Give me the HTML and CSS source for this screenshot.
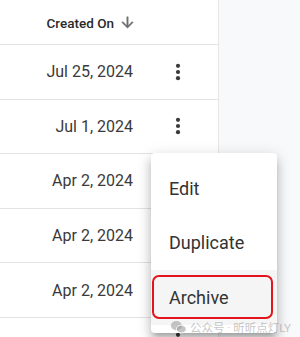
FILE: index.html
```html
<!DOCTYPE html>
<html lang="en">
<head>
    <meta charset="UTF-8">
    <meta name="viewport" content="width=device-width, initial-scale=1.0">
    <title>Created On</title>
    <link rel="stylesheet" href="styles.css">
</head>
<body>

    <div class="page">
        <div class="table">
            <div class="row head-row">
                <div class="cell-date head">
                    Created On
                    <svg class="sort-icon" viewBox="0 0 24 24" width="17" height="17"><path d="M20 12l-1.41-1.41L13 16.17V4h-2v12.17l-5.58-5.59L4 12l8 8 8-8z"/></svg>
                </div>
                <div class="cell-act"></div>
            </div>
            <div class="row">
                <div class="cell-date">Jul 25, 2024</div>
                <div class="cell-act"><svg class="kebab" viewBox="0 0 24 24" width="24" height="24"><circle cx="12" cy="5.8" r="2.1"/><circle cx="12" cy="12" r="2.1"/><circle cx="12" cy="18.2" r="2.1"/></svg></div>
            </div>
            <div class="row">
                <div class="cell-date">Jul 1, 2024</div>
                <div class="cell-act"><svg class="kebab" viewBox="0 0 24 24" width="24" height="24"><circle cx="12" cy="5.8" r="2.1"/><circle cx="12" cy="12" r="2.1"/><circle cx="12" cy="18.2" r="2.1"/></svg></div>
            </div>
            <div class="row">
                <div class="cell-date">Apr 2, 2024</div>
                <div class="cell-act"></div>
            </div>
            <div class="row">
                <div class="cell-date">Apr 2, 2024</div>
                <div class="cell-act"></div>
            </div>
            <div class="row">
                <div class="cell-date">Apr 2, 2024</div>
                <div class="cell-act"></div>
            </div>
            <div class="row">
                <div class="cell-date"></div>
                <div class="cell-act"><svg class="kebab low" viewBox="0 0 24 24" width="24" height="24"><circle cx="12" cy="5.8" r="2.1"/><circle cx="12" cy="12" r="2.1"/><circle cx="12" cy="18.2" r="2.1"/></svg></div>
            </div>
        </div>
        <div class="side"></div>

        <!-- row action menu -->
        <div class="menu">
            <div class="menu-item">Edit</div>
            <div class="menu-item">Duplicate</div>
            <div class="menu-item active">Archive</div>
        </div>

        <div class="watermark">
            <svg viewBox="0 0 24 20" width="17" height="14"><ellipse cx="9" cy="8" rx="8" ry="6.5"/><ellipse cx="16" cy="13" rx="7" ry="5.5" stroke="#fff" stroke-width="1.2"/></svg>
            <span>公众号 · 昕昕点灯LY</span>
        </div>
    </div>

</body>
</html>
```

FILE: styles.css
```css
body {
    margin: 0;
    font-family: Roboto, "Noto Sans CJK SC", sans-serif;
    color: #333;
    background-color: #fff;
}
.page {
    position: relative;
    display: flex;
    height: 337px;
    overflow: hidden;
}
.table {
    width: 218px;
    border-right: 1px solid #e6e6e6;
    flex-shrink: 0;
}
.side {
    flex: 1;
    background-color: #f8f9fa;
}
.row {
    display: flex;
    align-items: center;
    box-sizing: border-box;
    height: 54.6px;
    border-bottom: 1px solid #e3e3e3;
}
.head-row {
    height: 45px;
}
.cell-date {
    width: 149px;
    box-sizing: border-box;
    padding-right: 16px;
    text-align: right;
    font-size: 16px;
    color: #3a3a3a;
}
.head {
    display: flex;
    align-items: center;
    justify-content: flex-end;
    gap: 5px;
    padding-right: 13px;
    padding-top: 1px;
    font-size: 13.5px;
    font-weight: 500;
    color: #2a2a2a;
}
.sort-icon {
    fill: #6e6e6e;
    stroke: #6e6e6e;
    stroke-width: 0.6;
}
.cell-act {
    width: 58px;
    display: flex;
    justify-content: center;
}
.kebab {
    fill: #3a3a3a;
}
.kebab.low {
    margin-top: -8px;
}
.menu {
    position: absolute;
    left: 151px;
    top: 153px;
    width: 126px;
    padding: 8px 0;
    background-color: #fff;
    border-radius: 4px;
    box-shadow: 0 5px 5px -3px rgba(0, 0, 0, 0.2), 0 8px 10px 1px rgba(0, 0, 0, 0.14), 0 3px 14px 2px rgba(0, 0, 0, 0.12);
}
.menu-item {
    position: relative;
    height: 54.5px;
    display: flex;
    align-items: center;
    padding-left: 18px;
    font-size: 18px;
    color: #333;
}
.menu-item.active {
    background-color: #f5f5f5;
}
.menu-item.active::after {
    content: "";
    position: absolute;
    left: 1px;
    right: 4px;
    top: 5px;
    bottom: 6px;
    border: 2px solid #e3141b;
    border-radius: 7px;
}
.watermark {
    position: absolute;
    left: 170px;
    top: 319px;
    display: flex;
    align-items: center;
    gap: 3px;
    font-size: 11.5px;
    color: rgba(150, 150, 150, 0.55);
    fill: rgba(150, 150, 150, 0.55);
}
```
